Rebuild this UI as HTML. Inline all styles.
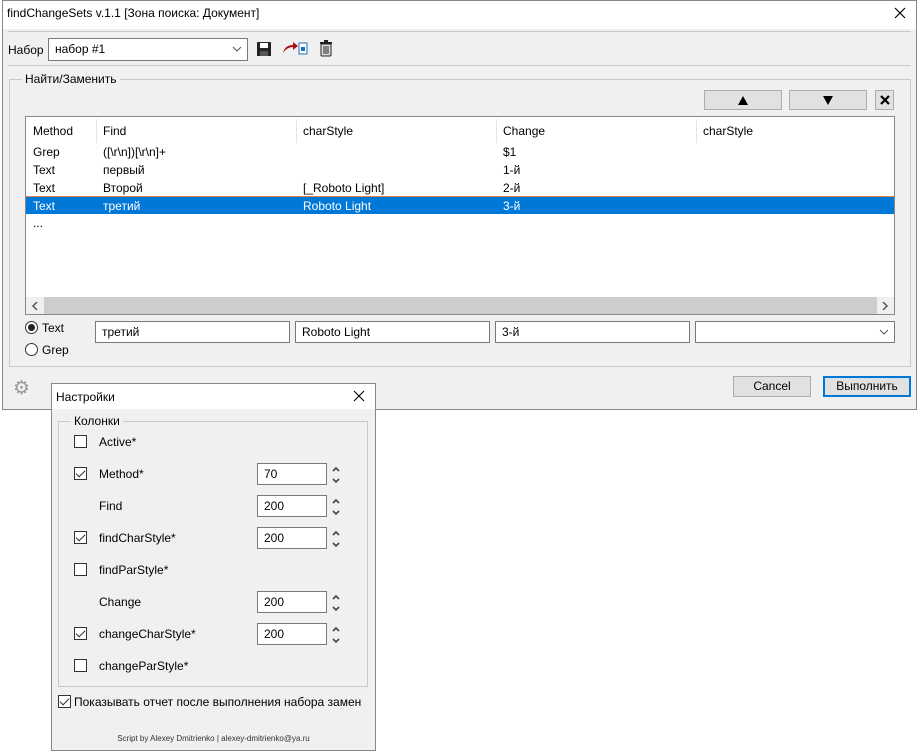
<!DOCTYPE html>
<html><head><meta charset="utf-8"><style>
*{box-sizing:border-box;margin:0;padding:0}
body{width:920px;height:752px;background:#fff;font-family:"Liberation Sans","Noto Sans CJK SC",sans-serif;font-size:12px;color:#000;position:relative;overflow:hidden}
.a{position:absolute}
.win{left:2px;top:0;width:915px;height:410px;border:1px solid #888;background:#f0f0f0}
.inp{background:#fff;border:1px solid #7a7a7a;padding:2px 6px;height:22px;line-height:16px}
.btn{background:#e1e1e1;border:1px solid #adadad;text-align:center}
.cb{width:13px;height:13px;border:1px solid #333;background:#fff}
.cbx::after{content:"";position:absolute;left:3px;top:0px;width:4px;height:8px;border:solid #333;border-width:0 1.5px 1.5px 0;transform:rotate(45deg)}
.x{position:absolute}
</style></head><body>
<div class="a win"></div>
<div class="a" style="left:3px;top:1px;width:913px;height:28px;background:#fff"></div>
<div class="a" style="left:7px;top:6px">findChangeSets v.1.1 [Зона поиска: Документ]</div>
<svg class="a" style="left:894px;top:7px" width="12" height="12"><path d="M1 1L11 11M11 1L1 11" stroke="#000" stroke-width="1.2"/></svg>
<div class="a" style="left:8px;top:31px;width:903px;border-top:1px solid #c8c8c8"></div>
<div class="a" style="left:8px;top:43px">Набор</div>
<div class="a inp" style="left:48px;top:38px;width:200px;height:23px">набор #1</div>
<svg class="a" style="left:232px;top:46px" width="10" height="6"><path d="M1 1L5 5L9 1" stroke="#555" fill="none"/></svg>
<svg class="a" style="left:256px;top:41px" width="16" height="16"><rect x="1" y="1" width="14" height="14" fill="#222"/><rect x="4" y="2" width="8" height="5" fill="#fff"/><rect x="4" y="10" width="8" height="5" fill="#555"/></svg>
<svg class="a" style="left:281px;top:40px" width="28" height="16"><path d="M2 13 Q4 5 12 5 L12 2 L17 6 L12 10 L12 7 Q6 7 2 13Z" fill="#b01010"/><rect x="18" y="3" width="8" height="11" fill="#fff" stroke="#1a6fc0"/><rect x="20" y="7" width="4" height="4" fill="#1a6fc0"/></svg>
<svg class="a" style="left:319px;top:40px" width="14" height="17"><rect x="2" y="4" width="10" height="12" rx="1" fill="#ddd" stroke="#222"/><rect x="1" y="2" width="12" height="2" fill="#222"/><rect x="5" y="0" width="4" height="2" fill="#222"/><path d="M5 6v8M7 6v8M9 6v8" stroke="#222"/></svg>
<div class="a" style="left:8px;top:65px;width:903px;border-top:1px solid #c8c8c8"></div>
<div class="a" style="left:9px;top:79px;width:902px;height:288px;border:1px solid #c8c8c8"></div>
<div class="a" style="left:22px;top:72px;background:#f0f0f0;padding:0 3px">Найти/Заменить</div>
<div class="a btn" style="left:704px;top:90px;width:78px;height:20px"><svg style="margin-top:5px" width="10" height="9"><path d="M5 0L10 9H0Z" fill="#000"/></svg></div>
<div class="a btn" style="left:789px;top:90px;width:78px;height:20px"><svg style="margin-top:5px" width="10" height="9"><path d="M0 0H10L5 9Z" fill="#000"/></svg></div>
<div class="a btn" style="left:875px;top:90px;width:19px;height:20px"><svg style="margin-top:4px" width="10" height="10"><path d="M1 1L9 9M9 1L1 9" stroke="#000" stroke-width="2.2"/></svg></div>
<div class="a" style="left:25px;top:116px;width:870px;height:199px;border:1px solid #828790;background:#fff"></div>
<div class="a" style="left:96px;top:119px;height:24px;border-left:1px solid #e5e5e5"></div>
<div class="a" style="left:296px;top:119px;height:24px;border-left:1px solid #e5e5e5"></div>
<div class="a" style="left:496px;top:119px;height:24px;border-left:1px solid #e5e5e5"></div>
<div class="a" style="left:696px;top:119px;height:24px;border-left:1px solid #e5e5e5"></div>
<div class="a" style="left:33px;top:124px">Method</div><div class="a" style="left:103px;top:124px">Find</div><div class="a" style="left:303px;top:124px">charStyle</div><div class="a" style="left:503px;top:124px">Change</div><div class="a" style="left:703px;top:124px">charStyle</div>
<div class="a" style="left:33px;top:145px">Grep</div><div class="a" style="left:103px;top:145px">([\r\n])[\r\n]+</div><div class="a" style="left:503px;top:145px">$1</div>
<div class="a" style="left:33px;top:163px">Text</div><div class="a" style="left:103px;top:163px">первый</div><div class="a" style="left:503px;top:163px">1-й</div>
<div class="a" style="left:33px;top:181px">Text</div><div class="a" style="left:103px;top:181px">Второй</div><div class="a" style="left:303px;top:181px">[_Roboto Light]</div><div class="a" style="left:503px;top:181px">2-й</div>
<div class="a" style="left:26px;top:196px;width:868px;height:18px;background:#0078d7;border-top:1px solid #e08040"></div>
<div class="a" style="left:33px;top:199px;color:#fff">Text</div><div class="a" style="left:103px;top:199px;color:#fff">третий</div><div class="a" style="left:303px;top:199px;color:#fff">Roboto Light</div><div class="a" style="left:503px;top:199px;color:#fff">3-й</div>
<div class="a" style="left:33px;top:216px">...</div>
<div class="a" style="left:26px;top:297px;width:868px;height:17px;background:#f0f0f0"></div>
<div class="a" style="left:44px;top:297px;width:833px;height:17px;background:#cdcdcd"></div>
<svg class="a" style="left:32px;top:302px" width="6" height="8"><path d="M5 0L1 4L5 8" stroke="#555" stroke-width="1.5" fill="none"/></svg>
<svg class="a" style="left:882px;top:302px" width="6" height="8"><path d="M1 0L5 4L1 8" stroke="#555" stroke-width="1.5" fill="none"/></svg>
<div class="a" style="left:25px;top:321px;width:13px;height:13px;border:1px solid #333;border-radius:50%;background:#fff"></div>
<div class="a" style="left:28px;top:324px;width:7px;height:7px;border-radius:50%;background:#222"></div>
<div class="a" style="left:42px;top:321px">Text</div>
<div class="a" style="left:25px;top:343px;width:13px;height:13px;border:1px solid #333;border-radius:50%;background:#fff"></div>
<div class="a" style="left:42px;top:343px">Grep</div>
<div class="a inp" style="left:95px;top:321px;width:195px">третий</div>
<div class="a inp" style="left:295px;top:321px;width:195px">Roboto Light</div>
<div class="a inp" style="left:495px;top:321px;width:195px">3-й</div>
<div class="a inp" style="left:695px;top:321px;width:200px"></div>
<svg class="a" style="left:879px;top:329px" width="10" height="6"><path d="M1 1L5 5L9 1" stroke="#555" fill="none"/></svg>
<div class="a" style="left:13px;top:377px;color:#999;font-size:19px">⚙</div>
<div class="a btn" style="left:733px;top:376px;width:78px;height:21px;line-height:19px">Cancel</div>
<div class="a btn" style="left:823px;top:376px;width:88px;height:21px;line-height:17px;border:2px solid #0078d7">Выполнить</div>
<!-- dialog -->
<div class="a" style="left:51px;top:383px;width:325px;height:368px;border:1px solid #888;background:#f0f0f0"></div>
<div class="a" style="left:52px;top:384px;width:323px;height:25px;background:#fff"></div>
<div class="a" style="left:56px;top:390px">Настройки</div>
<svg class="a" style="left:353px;top:390px" width="12" height="12"><path d="M1 1L11 11M11 1L1 11" stroke="#000" stroke-width="1.1"/></svg>
<div class="a" style="left:58px;top:421px;width:310px;height:266px;border:1px solid #c8c8c8"></div>
<div class="a" style="left:71px;top:414px;background:#f0f0f0;padding:0 3px">Колонки</div>
<div class="a cb" style="left:74px;top:435px"></div><div class="a" style="left:99px;top:435px">Active*</div>
<div class="a cb cbx" style="left:74px;top:467px"></div><div class="a" style="left:99px;top:467px">Method*</div>
<div class="a" style="left:99px;top:499px">Find</div>
<div class="a cb cbx" style="left:74px;top:531px"></div><div class="a" style="left:99px;top:531px">findCharStyle*</div>
<div class="a cb" style="left:74px;top:563px"></div><div class="a" style="left:99px;top:563px">findParStyle*</div>
<div class="a" style="left:99px;top:595px">Change</div>
<div class="a cb cbx" style="left:74px;top:627px"></div><div class="a" style="left:99px;top:627px">changeCharStyle*</div>
<div class="a cb" style="left:74px;top:659px"></div><div class="a" style="left:99px;top:659px">changeParStyle*</div>
<div class="a inp" style="left:257px;top:463px;width:70px">70</div>
<div class="a inp" style="left:257px;top:495px;width:70px">200</div>
<div class="a inp" style="left:257px;top:527px;width:70px">200</div>
<div class="a inp" style="left:257px;top:591px;width:70px">200</div>
<div class="a inp" style="left:257px;top:623px;width:70px">200</div>
<svg class="a" style="left:331px;top:465px" width="10" height="180">
<g stroke="#444" stroke-width="1.6" fill="none">
<path d="M2 6L5 3L8 6M2 14L5 17L8 14"/>
<path d="M2 38L5 35L8 38M2 46L5 49L8 46"/>
<path d="M2 70L5 67L8 70M2 78L5 81L8 78"/>
<path d="M2 134L5 131L8 134M2 142L5 145L8 142"/>
<path d="M2 166L5 163L8 166M2 174L5 177L8 174"/>
</g></svg>
<div class="a cb cbx" style="left:58px;top:695px"></div><div class="a" style="left:74px;top:695px">Показывать отчет после выполнения набора замен</div>
<div class="a" style="left:51px;top:734px;width:325px;text-align:center;font-size:8px;color:#333">Script by Alexey Dmitrienko | alexey-dmitrienko@ya.ru</div>
</body></html>
